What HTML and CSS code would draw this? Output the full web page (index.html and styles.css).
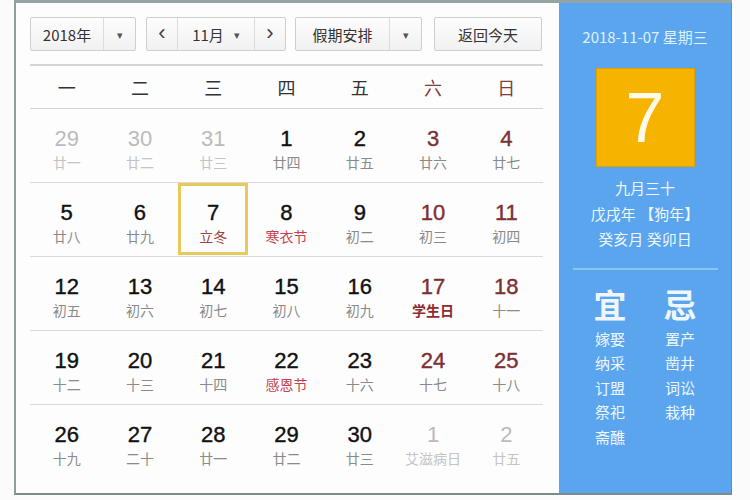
FILE: index.html
```html
<!DOCTYPE html>
<html lang="zh">
<head>
<meta charset="utf-8">
<title>万年历</title>
<link rel="stylesheet" href="styles.css">
</head>
<body>
<div class="frame">
  <div class="main">
    <div class="toolbar">
      <div class="select year"><span class="label">2018年</span><span class="caret">▾</span></div>
      <div class="select month">
        <span class="nav">‹</span>
        <span class="label">11月 <span class="caret-in">▾</span></span>
        <span class="nav">›</span>
      </div>
      <div class="select holiday"><span class="label">假期安排</span><span class="caret">▾</span></div>
      <div class="btn back-today">返回今天</div>
    </div>
    <div class="weekdays">
      <span>一</span><span>二</span><span>三</span><span>四</span><span>五</span><span class="we">六</span><span class="we">日</span>
    </div>
    <div class="grid">
      <div class="cell other"><b>29</b><i>廿一</i></div>
      <div class="cell other"><b>30</b><i>廿二</i></div>
      <div class="cell other"><b>31</b><i>廿三</i></div>
      <div class="cell"><b>1</b><i>廿四</i></div>
      <div class="cell"><b>2</b><i>廿五</i></div>
      <div class="cell we"><b>3</b><i>廿六</i></div>
      <div class="cell we"><b>4</b><i>廿七</i></div>

      <div class="cell"><b>5</b><i>廿八</i></div>
      <div class="cell"><b>6</b><i>廿九</i></div>
      <div class="cell current"><b>7</b><i class="fest term">立冬</i></div>
      <div class="cell"><b>8</b><i class="fest">寒衣节</i></div>
      <div class="cell"><b>9</b><i>初二</i></div>
      <div class="cell we"><b>10</b><i>初三</i></div>
      <div class="cell we"><b>11</b><i>初四</i></div>

      <div class="cell"><b>12</b><i>初五</i></div>
      <div class="cell"><b>13</b><i>初六</i></div>
      <div class="cell"><b>14</b><i>初七</i></div>
      <div class="cell"><b>15</b><i>初八</i></div>
      <div class="cell"><b>16</b><i>初九</i></div>
      <div class="cell we"><b>17</b><i class="fest dark">学生日</i></div>
      <div class="cell we"><b>18</b><i>十一</i></div>

      <div class="cell"><b>19</b><i>十二</i></div>
      <div class="cell"><b>20</b><i>十三</i></div>
      <div class="cell"><b>21</b><i>十四</i></div>
      <div class="cell"><b>22</b><i class="fest">感恩节</i></div>
      <div class="cell"><b>23</b><i>十六</i></div>
      <div class="cell we"><b>24</b><i>十七</i></div>
      <div class="cell we"><b>25</b><i>十八</i></div>

      <div class="cell last"><b>26</b><i>十九</i></div>
      <div class="cell last"><b>27</b><i>二十</i></div>
      <div class="cell last"><b>28</b><i>廿一</i></div>
      <div class="cell last"><b>29</b><i>廿二</i></div>
      <div class="cell last"><b>30</b><i>廿三</i></div>
      <div class="cell last other"><b>1</b><i>艾滋病日</i></div>
      <div class="cell last other"><b>2</b><i>廿五</i></div>
    </div>
  </div>
  <div class="side">
    <div class="side-date">2018-11-07 星期三</div>
    <div class="bigday">7</div>
    <div class="lunar">
      <div>九月三十</div>
      <div>戊戌年 【狗年】</div>
      <div>癸亥月 癸卯日</div>
    </div>
    <div class="side-sep"></div>
    <div class="yiji">
      <div class="col">
        <div class="head">宜</div>
        <div>嫁娶</div><div>纳采</div><div>订盟</div><div>祭祀</div><div>斋醮</div>
      </div>
      <div class="col">
        <div class="head">忌</div>
        <div>置产</div><div>凿井</div><div>词讼</div><div>栽种</div>
      </div>
    </div>
  </div>
</div>
</body>
</html>
```
FILE: styles.css
```css
* { box-sizing: border-box; }
html, body { margin: 0; padding: 0; background: #fbfbfb; }
body {
  font-family: "Noto Sans CJK SC", "Liberation Sans", sans-serif;
  color: #222;
  width: 750px;
  height: 500px;
  overflow: hidden;
}
.frame {
  margin-left: 14px;
  width: 718px;
  height: 495px;
  border-left: 2px solid #8f9d9d;
  border-top: 3px solid #93a3a6;
  border-bottom: 2px solid #7d8a8a;
  display: flex;
  background: #fdfdfd;
}
.main {
  width: 543px;
  padding: 14px 16px 0 14px;
  display: flex;
  flex-direction: column;
}
.toolbar {
  display: flex;
  height: 34px;
  gap: 10px;
}
.select, .btn {
  height: 34px;
  border: 1px solid #cfcfcf;
  border-radius: 2px;
  background: linear-gradient(#fdfdfd, #f1f1f1);
  display: flex;
  align-items: stretch;
  font-size: 15px;
  color: #333;
}
.select .label {
  flex: 1;
  display: flex;
  align-items: center;
  justify-content: center;
}
.select .caret {
  width: 32px;
  border-left: 1px solid #dcdcdc;
  display: flex;
  align-items: center;
  justify-content: center;
  font-size: 11px;
  color: #555;
}
.caret-in { font-size: 11px; color: #555; margin-left: 10px; }
.year { width: 106px; }
.month { width: 140px; }
.month .nav {
  width: 30px;
  display: flex;
  align-items: center;
  justify-content: center;
  font-size: 22px;
  color: #444;
  font-family: "Liberation Sans", sans-serif;
  padding-bottom: 3px;
}
.month .label {
  border-left: 1px solid #dcdcdc;
  border-right: 1px solid #dcdcdc;
}
.holiday { width: 127px; margin-left: -1px; }
.back-today {
  width: 108px;
  margin-left: 2px;
  justify-content: center;
  align-items: center;
}
.weekdays {
  margin-top: 13px;
  border-top: 2px solid #d4d4d4;
  border-bottom: 1px solid #d4d4d4;
  height: 45px;
  display: grid;
  grid-template-columns: repeat(7, minmax(0, 1fr));
  align-items: center;
  text-align: center;
  font-size: 18px;
  color: #333;
}
.weekdays .we { color: #7e3d3d; }
.grid {
  display: grid;
  grid-template-columns: repeat(7, minmax(0, 1fr));
  grid-auto-rows: 74px;
}
.cell {
  border-bottom: 1px solid #dadada;
  display: flex;
  flex-direction: column;
  align-items: center;
  padding-top: 17px;
  position: relative;
  white-space: nowrap;
}
.cell.last { border-bottom: none; }
.cell b {
  font-family: "Liberation Sans", sans-serif;
  font-weight: normal;
  font-size: 22px;
  line-height: 26px;
  color: #111;
  -webkit-text-stroke: 0.4px #111;
}
.cell i {
  font-style: normal;
  font-size: 14px;
  line-height: 20px;
  color: #8a8a8a;
  margin-top: 0;
}
.cell.we b { color: #7e2f33; -webkit-text-stroke: 0.4px #7e2f33; }
.cell.other b { color: #bbbbbb; -webkit-text-stroke: 0; }
.cell.other i { color: #c4c4c4; }
.cell i.fest { color: #c7424f; }
.cell i.fest.dark { color: #8e2a30; font-weight: bold; }
.cell i.term { color: #9a4545; }
.cell.current::after {
  content: "";
  position: absolute;
  left: 1px;
  right: 2px;
  top: 0;
  bottom: 1px;
  border: 3px solid #e8ca5a;
}
.side {
  width: 173px;
  background: #5aa5ee;
  border-right: 1px solid #4f8fcf;
  color: #eef7ff;
  display: flex;
  flex-direction: column;
  align-items: center;
}
.side-date {
  margin-top: 24px;
  font-size: 15px;
  color: #dff1ff;
  line-height: 20px;
}
.bigday {
  margin-top: 21px;
  width: 99px;
  height: 99px;
  background: #f6b400;
  border: 1px solid #e0a000;
  color: #fffbe8;
  font-family: "Liberation Sans", sans-serif;
  font-size: 70px;
  display: flex;
  align-items: center;
  justify-content: center;
}
.lunar {
  margin-top: 8px;
  text-align: center;
  font-size: 15px;
  line-height: 25.5px;
}
.side-sep {
  margin-top: 16px;
  width: 145px;
  border-top: 2px solid #8cc3f4;
}
.yiji {
  display: flex;
  gap: 30px;
  margin-top: 14px;
}
.col {
  display: flex;
  flex-direction: column;
  align-items: center;
  font-size: 15px;
  line-height: 24.5px;
  width: 40px;
}
.col .head {
  font-size: 33px;
  font-weight: bold;
  line-height: 40px;
  margin-bottom: 3px;
}
```
